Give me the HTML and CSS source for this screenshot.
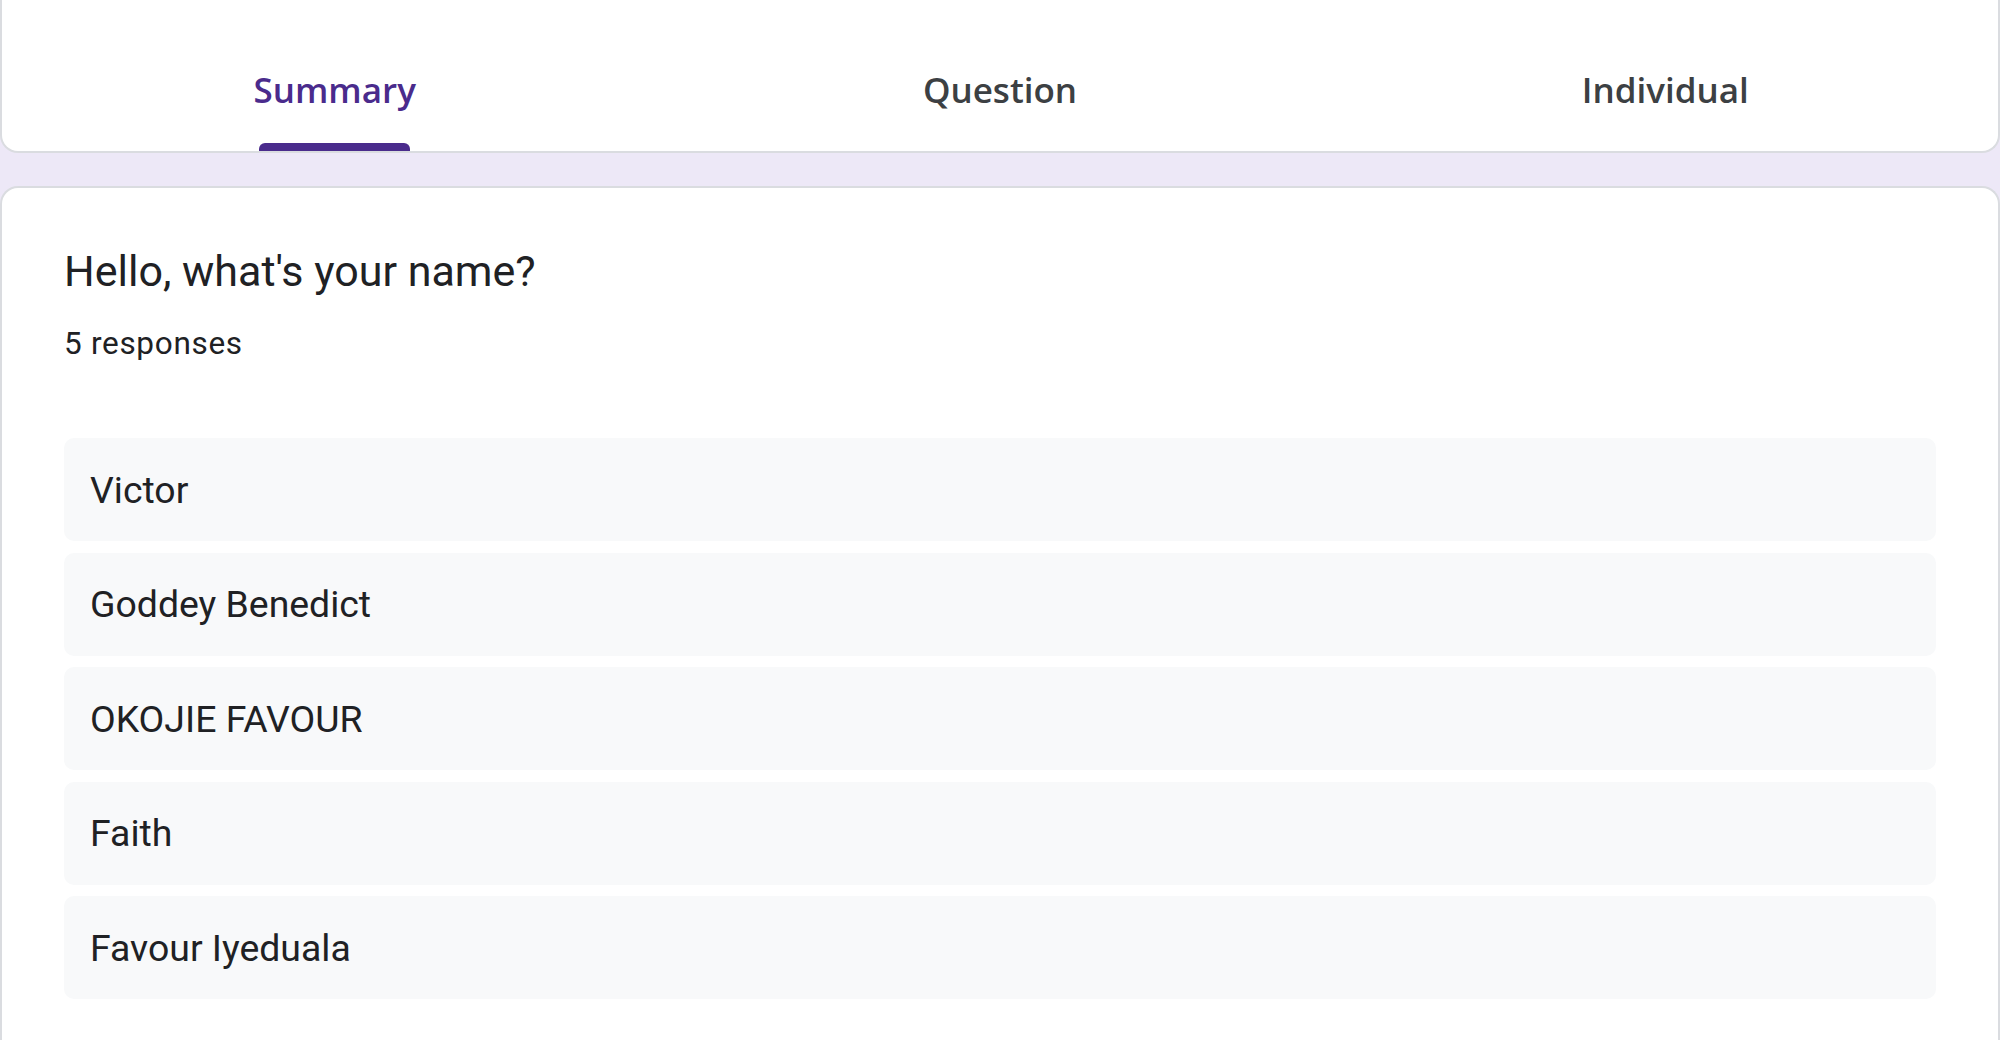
FILE: index.html
```html
<!DOCTYPE html>
<html lang="en">
<head>
<meta charset="utf-8">
<title>Responses</title>
<link rel="stylesheet" href="styles.css">
</head>
<body>
  <header class="tabs-card">
    <nav class="tabs">
      <div class="tab tab-active">
        <span class="tab-label">Summary</span>
        <span class="tab-indicator"></span>
      </div>
      <div class="tab">
        <span class="tab-label">Question</span>
      </div>
      <div class="tab">
        <span class="tab-label">Individual</span>
      </div>
    </nav>
  </header>

  <main class="question-card">
    <h1 class="question-title">Hello, what's your name?</h1>
    <p class="response-count">5 responses</p>
    <ul class="answers">
      <li class="answer">Victor</li>
      <li class="answer">Goddey Benedict</li>
      <li class="answer">OKOJIE FAVOUR</li>
      <li class="answer">Faith</li>
      <li class="answer">Favour Iyeduala</li>
    </ul>
  </main>
</body>
</html>
```

FILE: styles.css
```css
* {
  box-sizing: border-box;
}

html, body {
  margin: 0;
  padding: 0;
}

body {
  background: #ede8f7;
  font-family: Roboto, "Liberation Sans", Arial, sans-serif;
  color: #202124;
  width: 2000px;
  height: 1040px;
  overflow: hidden;
}

.tabs-card {
  background: #ffffff;
  border: 2px solid #dadce0;
  border-top: none;
  border-radius: 0 0 18px 18px;
  height: 153px;
}

.tabs {
  display: flex;
  height: 151px;
}

.tab {
  flex: 1 1 0;
  display: flex;
  flex-direction: column;
  align-items: center;
}

.tab-label {
  margin-top: 68px;
  font-family: "Open Sans", "Noto Sans", sans-serif;
  font-weight: 600;
  font-size: 35px;
  line-height: 44px;
  color: #3c4043;
  letter-spacing: 0;
}

.tab-active .tab-label {
  color: #4a2b8c;
}

.tab-indicator {
  margin-top: auto;
  width: 151px;
  height: 8px;
  background: #4a2b8c;
  border-radius: 6px 6px 0 0;
}

.question-card {
  margin-top: 33px;
  background: #ffffff;
  border: 2px solid #dadce0;
  border-bottom: none;
  border-radius: 18px 18px 0 0;
  padding: 55px 62px 40px 62px;
  min-height: 860px;
}

.question-title {
  margin: 0;
  font-weight: 400;
  font-size: 43px;
  line-height: 56px;
  color: #202124;
}

.response-count {
  margin: 25px 0 0 0;
  font-size: 31.5px;
  line-height: 40px;
  letter-spacing: 0.7px;
  color: #202124;
}

.answers {
  list-style: none;
  margin: 74px 0 0 0;
  padding: 0;
  display: flex;
  flex-direction: column;
  gap: 11.5px;
}

.answer {
  height: 103px;
  display: flex;
  align-items: center;
  padding: 0 26px;
  background: #f8f9fa;
  border-radius: 10px;
  font-size: 37.4px;
  line-height: 44px;
  color: #202124;
}
```
